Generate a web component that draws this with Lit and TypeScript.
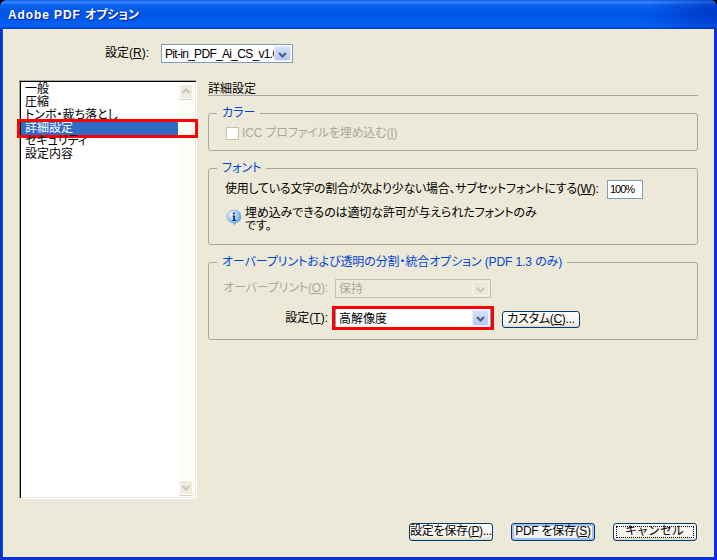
import { LitElement, html, css, svg } from "lit";
import { customElement } from "lit/decorators.js";

const chevron = svg`<path d="M4 6 L7.5 9.5 L11 6" fill="none" stroke="currentColor" stroke-width="2.2"/>`;

@customElement("app-root")
export class AppRoot extends LitElement {
  static styles = css`
    :host { display: block; width: 717px; height: 560px; background: #000; overflow: hidden;
      font: 12px/13px "Liberation Sans", "Noto Sans CJK JP", sans-serif; color: #000;
      font-feature-settings: "palt"; }
    .window { width: 717px; height: 560px; display: flex; flex-direction: column;
      border-radius: 7px 7px 0 0; overflow: hidden; background: #0831d9; }
    .title { height: 29px; flex: none; box-sizing: border-box; padding: 9px 0 0 8px; color: #fff;
      font-weight: 700; font-size: 12px; letter-spacing: 0.9px; text-shadow: 1px 1px 0 #0f1fa8;
      background:
        radial-gradient(70px 40px at 100% 40%, rgba(0,30,170,.55), transparent),
        linear-gradient(#0a5ae6 0, #3c8cff 2px, #0a63ef 5px, #0056e8 12px, #0058ee 20px, #0464f4 26px, #0039c8 29px); }
    .title span { letter-spacing: -0.1px; font-size: 12px; }
    .content { flex: 1; margin: 0 3px 3px 3px; background: #ece9d8; box-shadow: -1px 0 0 #0855dd;
      display: flex; flex-direction: column; }
    .preset { display: flex; align-items: center; padding: 15px 0 0 102px; height: 19px; }
    .preset label { width: 56px; }
    .preset .val { letter-spacing: -0.7px; }
    .main { display: flex; gap: 11px; padding: 12px 16px 0 16px; }
    .list { width: 178px; height: 419px; box-sizing: border-box; margin-top: 5px; display: flex;
      background: #fff; border: 1px solid; border-color: #aca899 #fff #fff #aca899;
      box-shadow: inset 1px 1px 0 #000, inset -1px -1px 0 #f1efe2; padding: 1px 2px 2px 1px; position: relative; }
    .items { flex: 1; margin-top: 1px; }
    .item { height: 13px; padding-left: 4px; white-space: nowrap; position: relative; }
    .item.sel { background: #316ac5; color: #fff; }
    .redmark { position: absolute; left: -4px; right: -4px; top: -3px; bottom: -3px;
      border: 3px solid #f00; pointer-events: none; }
    .item .redmark { right: -20px; }
    .scroll { width: 16px; background: #fdfdf8; display: flex; flex-direction: column;
      justify-content: space-between; padding: 2px 1px 1px; box-sizing: border-box; }
    .sb { width: 14px; height: 15px; border-radius: 2px; background: #eeebe0; border: 1px solid #fff;
      box-sizing: border-box; color: #c9c7ba; box-shadow: 0 1px 0 #d8d5c8; }
    .sb svg { display: block; }
    .up svg { transform: scaleY(-1); }
    .panel { width: 490px; display: flex; flex-direction: column; gap: 11px; }
    .heading { height: 20px; line-height: 29px; border-bottom: 1px solid #aca899; }
    fieldset { margin: 0; padding: 0; border: 1px solid #aca899; border-radius: 3px; box-sizing: border-box;
      min-width: 0; }
    legend { margin-left: 8px; padding: 0 5px; color: #0046d5; height: 13px; }
    .g1 { height: 44px; }
    .g2 { height: 83px; }
    .g3 { height: 84px; }
    .g3 legend { letter-spacing: -0.1px; }
    .check { display: flex; align-items: center; gap: 3px; margin: 7px 0 0 17px; color: #aca899; letter-spacing: -0.15px; }
    .box { width: 13px; height: 13px; box-sizing: border-box; background: #fff; border: 1px solid #c4c1b0; }
    .fontrow { display: flex; align-items: center; padding: 5px 0 0 16px; height: 18px; }
    .fontrow span { width: 382px; white-space: nowrap; letter-spacing: -0.25px; }
    .pct { width: 36px; height: 19px; box-sizing: border-box; border: 1px solid #7f9db9; background: #fff;
      padding: 2px 2px; font-size: 11px; letter-spacing: -1px; }
    .note { display: flex; gap: 3px; margin: 9px 0 0 17px; letter-spacing: -0.1px; }
    .note svg { margin-top: 2px; flex: none; }
    .grid { display: grid; grid-template-columns: 119px 156px auto; column-gap: 7px; row-gap: 10px;
      align-items: center; padding-top: 10px; justify-content: start; }
    .grid label { text-align: right; white-space: nowrap; }
    .dis { color: #aca899; letter-spacing: -0.15px; }
    .select { height: 19px; box-sizing: border-box; border: 1px solid #7f9db9; background: #fff;
      display: flex; padding: 1px; position: relative; }
    .select .val { flex: 1; min-width: 0; padding: 2px 0 0 2px; overflow: hidden; white-space: nowrap; }
    .select .arrow { width: 17px; flex: none; background: linear-gradient(#d5e1fc, #b4c8f6); color: #4d6185;
      border-radius: 2px; border: 1px solid #e6edfd; box-sizing: border-box; }
    .select .arrow svg { display: block; }
    .preset .select { width: 132px; }
    .select.off { background: #ece9d8; border-color: #c4c1b0; color: #aca899; }
    .select.off .val { background: #ece9d8; }
    .select.off .arrow { background: #ece9d8; color: #c9c7ba; border-color: #f5f3ea; }
    .set { height: 20px; }
    .set .val { padding-top: 3px; }
    .btn { box-sizing: border-box; height: 18px; border: 1px solid #003c74; border-radius: 3px;
      background: linear-gradient(#fff, #f4f2ea 80%, #dcd8c8); text-align: center; line-height: 15px;
      white-space: nowrap; letter-spacing: -0.3px; }
    .custom { width: 78px; margin-left: 4px; height: 17px; align-self: end; }
    .footer { display: flex; justify-content: flex-end; gap: 18px; padding: 24px 17px 0 0; }
    .footer .btn { width: 84px; }
    .def { box-shadow: inset 0 0 0 2px #a4c0ee; }
    .focus { position: relative; letter-spacing: 1px; }
    .focus i { position: absolute; inset: 2px; border: 1px dotted #000; }
    u { text-underline-offset: 1px; }
  `;

  private arrow() {
    return html`<div class="arrow"><svg width="15" height="15" viewBox="0 0 15 15">${chevron}</svg></div>`;
  }

  render() {
    const items = ["一般", "圧縮", "トンボ・裁ち落とし", "詳細設定", "セキュリティ", "設定内容"];
    return html`
      <div class="window">
        <div class="title">Adobe PDF <span>オプション</span></div>
        <div class="content">
          <div class="preset">
            <label>設定(<u>R</u>):</label>
            <div class="select"><div class="val">Pit-in_PDF_Ai_CS_v1.0</div>${this.arrow()}</div>
          </div>
          <div class="main">
            <div class="list">
              <div class="items">
                ${items.map(t => html`<div class="item ${t === "詳細設定" ? "sel" : ""}">${t}${t === "詳細設定" ? html`<div class="redmark"></div>` : ""}</div>`)}
              </div>
              <div class="scroll">
                <div class="sb up"><svg width="12" height="13" viewBox="1.5 1 12 13">${chevron}</svg></div>
                <div class="sb"><svg width="12" height="13" viewBox="1.5 1 12 13">${chevron}</svg></div>
              </div>
            </div>
            <div class="panel">
              <div class="heading">詳細設定</div>
              <fieldset class="g1">
                <legend>カラー</legend>
                <div class="check"><div class="box"></div><span>ICC プロファイルを埋め込む(<u>I</u>)</span></div>
              </fieldset>
              <fieldset class="g2">
                <legend>フォント</legend>
                <div class="fontrow"><span>使用している文字の割合が次より少ない場合、サブセットフォントにする(<u>W</u>):</span><div class="pct">100%</div></div>
                <div class="note">
                  <svg width="16" height="17" viewBox="0 0 16 17">
                    <defs><radialGradient id="ib" cx=".35" cy=".3" r=".8"><stop offset="0" stop-color="#eef7ff"/><stop offset=".6" stop-color="#8fc0ea"/><stop offset="1" stop-color="#3f86c8"/></radialGradient></defs>
                    <path d="M8 1a7 6.5 0 0 1 2.5 12.6L8.5 16 7.5 14A7 6.5 0 0 1 8 1z" fill="url(#ib)" stroke="#8fb4d8" stroke-width=".6"/>
                    <circle cx="8" cy="4.5" r="1.1" fill="#15386e"/>
                    <path d="M6.5 6.5H9V11H10V12H6.3V11H7.2V7.5H6.5z" fill="#15386e"/>
                  </svg>
                  <div>埋め込みできるのは適切な許可が与えられたフォントのみ<br />です。</div>
                </div>
              </fieldset>
              <fieldset class="g3">
                <legend>オーバープリントおよび透明の分割・統合オプション (PDF 1.3 のみ)</legend>
                <div class="grid">
                  <label class="dis">オーバープリント(<u>O</u>):</label>
                  <div class="select off"><div class="val">保持</div>${this.arrow()}</div>
                  <div></div>
                  <label>設定(<u>T</u>):</label>
                  <div class="select set"><div class="val">高解像度</div>${this.arrow()}<div class="redmark"></div></div>
                  <div class="btn custom">カスタム(<u>C</u>)...</div>
                </div>
              </fieldset>
            </div>
          </div>
          <div class="footer">
            <div class="btn">設定を保存(<u>P</u>)...</div>
            <div class="btn def">PDF を保存(<u>S</u>)</div>
            <div class="btn focus"><i></i>キャンセル</div>
          </div>
        </div>
      </div>
    `;
  }
}
